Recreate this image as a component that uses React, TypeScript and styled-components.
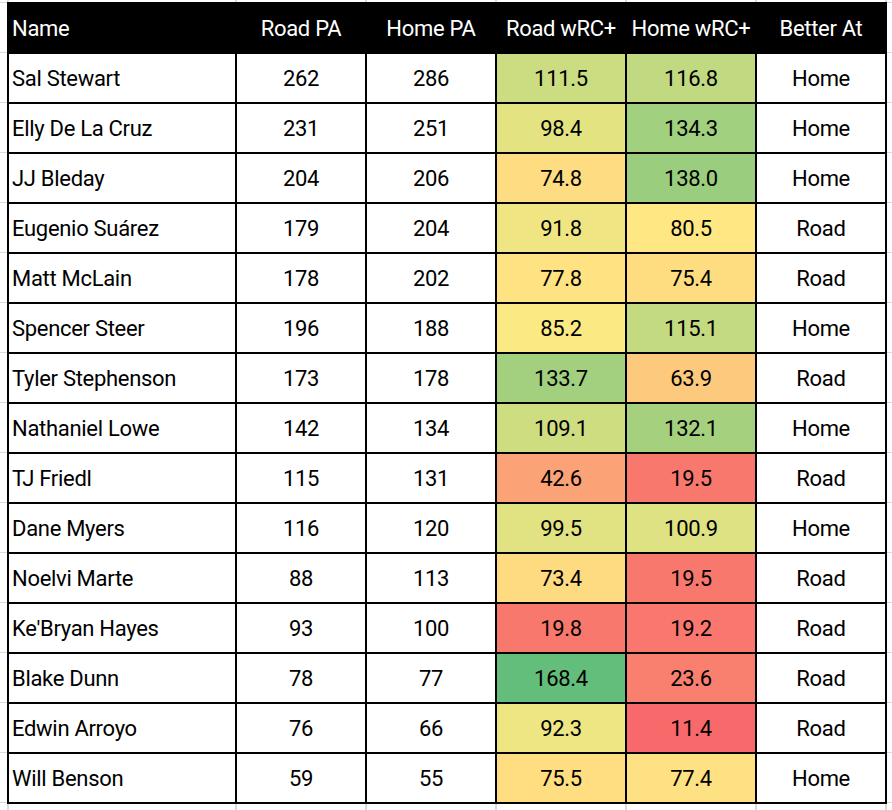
import React from 'react';
import styled, { createGlobalStyle } from 'styled-components';

type Row = {
  name: string
  roadPA: number
  homePA: number
  roadWrc: number
  homeWrc: number
  better: 'Home' | 'Road'
};

const rows: Row[] = [
  { name: 'Sal Stewart', roadPA: 262, homePA: 286, roadWrc: 111.5, homeWrc: 116.8, better: 'Home' },
  { name: 'Elly De La Cruz', roadPA: 231, homePA: 251, roadWrc: 98.4, homeWrc: 134.3, better: 'Home' },
  { name: 'JJ Bleday', roadPA: 204, homePA: 206, roadWrc: 74.8, homeWrc: 138.0, better: 'Home' },
  { name: 'Eugenio Suárez', roadPA: 179, homePA: 204, roadWrc: 91.8, homeWrc: 80.5, better: 'Road' },
  { name: 'Matt McLain', roadPA: 178, homePA: 202, roadWrc: 77.8, homeWrc: 75.4, better: 'Road' },
  { name: 'Spencer Steer', roadPA: 196, homePA: 188, roadWrc: 85.2, homeWrc: 115.1, better: 'Home' },
  { name: 'Tyler Stephenson', roadPA: 173, homePA: 178, roadWrc: 133.7, homeWrc: 63.9, better: 'Road' },
  { name: 'Nathaniel Lowe', roadPA: 142, homePA: 134, roadWrc: 109.1, homeWrc: 132.1, better: 'Home' },
  { name: 'TJ Friedl', roadPA: 115, homePA: 131, roadWrc: 42.6, homeWrc: 19.5, better: 'Road' },
  { name: 'Dane Myers', roadPA: 116, homePA: 120, roadWrc: 99.5, homeWrc: 100.9, better: 'Home' },
  { name: 'Noelvi Marte', roadPA: 88, homePA: 113, roadWrc: 73.4, homeWrc: 19.5, better: 'Road' },
  { name: "Ke'Bryan Hayes", roadPA: 93, homePA: 100, roadWrc: 19.8, homeWrc: 19.2, better: 'Road' },
  { name: 'Blake Dunn', roadPA: 78, homePA: 77, roadWrc: 168.4, homeWrc: 23.6, better: 'Road' },
  { name: 'Edwin Arroyo', roadPA: 76, homePA: 66, roadWrc: 92.3, homeWrc: 11.4, better: 'Road' },
  { name: 'Will Benson', roadPA: 59, homePA: 55, roadWrc: 75.5, homeWrc: 77.4, better: 'Home' },
];

// excel style 3-colour scale: min red, 50th percentile yellow, max green
const RED = [248, 105, 107];
const YELLOW = [255, 235, 132];
const GREEN = [99, 190, 123];

const allWrc = rows.flatMap(r => [r.roadWrc, r.homeWrc]).sort((a, b) => a - b);
const lo = allWrc[0];
const hi = allWrc[allWrc.length - 1];
const mid = (allWrc[allWrc.length / 2 - 1] + allWrc[allWrc.length / 2]) / 2;

const mix = (a: number[], b: number[], t: number) =>
  `rgb(${a.map((v, i) => Math.round(v + (b[i] - v) * t)).join(',')})`;

const scaleColor = (v: number) =>
  v <= mid ? mix(RED, YELLOW, (v - lo) / (mid - lo)) : mix(YELLOW, GREEN, (v - mid) / (hi - mid));

const headers: { label: string, align: 'left' | 'center' }[] = [
  { label: 'Name', align: 'left' },
  { label: 'Road PA', align: 'center' },
  { label: 'Home PA', align: 'center' },
  { label: 'Road wRC+', align: 'center' },
  { label: 'Home wRC+', align: 'center' },
  { label: 'Better At', align: 'center' },
];

export default function App() {
  return (
    <>
      <GlobalStyle />
      <Sheet>
        <Table>
          {headers.map(h => (
            <HeadCell key={h.label} $align={h.align}>{h.label}</HeadCell>
          ))}
          {rows.map(r => (
            <React.Fragment key={r.name}>
              <Cell $align="left">{r.name}</Cell>
              <Cell>{r.roadPA}</Cell>
              <Cell>{r.homePA}</Cell>
              <Cell $bg={scaleColor(r.roadWrc)}>{r.roadWrc.toFixed(1)}</Cell>
              <Cell $bg={scaleColor(r.homeWrc)}>{r.homeWrc.toFixed(1)}</Cell>
              <Cell>{r.better}</Cell>
            </React.Fragment>
          ))}
        </Table>
      </Sheet>
    </>
  );
}

const GlobalStyle = createGlobalStyle`
  html, body {
    margin: 0;
    background: #fff;
  }
  body {
    font-family: Roboto, "Liberation Sans", sans-serif;
  }
`;

const GRID = '#dadada';

// spreadsheet gridlines peeking out round the bordered table
const Sheet = styled.div`
  width: 892px;
  height: 810px;
  box-sizing: border-box;
  padding: 2px 0 0 7px;
  overflow: hidden;
  background-color: #fff;
  background-image:
    repeating-linear-gradient(to bottom, transparent 0 2px, ${GRID} 2px 3px, transparent 3px 50px),
    linear-gradient(${GRID}, ${GRID}),
    linear-gradient(${GRID}, ${GRID}),
    linear-gradient(${GRID}, ${GRID}),
    linear-gradient(${GRID}, ${GRID}),
    linear-gradient(${GRID}, ${GRID}),
    linear-gradient(${GRID}, ${GRID}),
    linear-gradient(${GRID}, ${GRID});
  background-size:
    100% 100%,
    2px 100%, 2px 100%, 2px 100%, 2px 100%, 2px 100%, 2px 100%, 2px 100%;
  background-position:
    0 0,
    7px 0, 235px 0, 365px 0, 495px 0, 625px 0, 755px 0, 885px 0;
  background-repeat: no-repeat;
`;

const Table = styled.div`
  display: inline-grid;
  grid-template-columns: 226px repeat(5, 128px);
  grid-auto-rows: 48px;
  gap: 2px;
  padding: 2px;
  background: #000;
`;

const Cell = styled.div<{ $align?: 'left' | 'center', $bg?: string }>`
  display: flex;
  align-items: center;
  justify-content: ${p => (p.$align === 'left' ? 'flex-start' : 'center')};
  padding: ${p => (p.$align === 'left' ? '0 0 0 3px' : '0')};
  background: ${p => p.$bg ?? '#fff'};
  color: #000;
  font-size: 22px;
  letter-spacing: -0.3px;
  white-space: nowrap;
`;

const HeadCell = styled(Cell)`
  background: #000;
  color: #fff;
`;
